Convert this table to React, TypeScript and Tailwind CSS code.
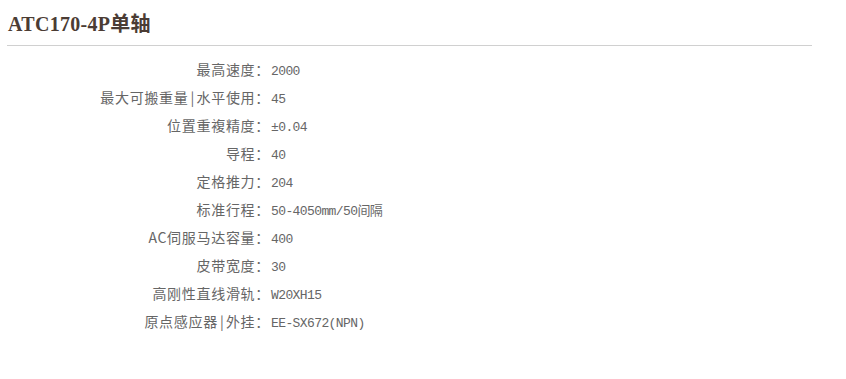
const specs = [
  { label: ["最高速度："], value: "2000" },
  { label: ["最大可搬重量", "水平使用："], value: "45" },
  { label: ["位置重複精度："], value: "±0.04" },
  { label: ["导程："], value: "40" },
  { label: ["定格推力："], value: "204" },
  { label: ["标准行程："], value: "50-4050mm/50间隔" },
  { label: ["AC伺服马达容量："], value: "400" },
  { label: ["皮带宽度："], value: "30" },
  { label: ["高刚性直线滑轨："], value: "W20XH15" },
  { label: ["原点感应器", "外挂："], value: "EE-SX672(NPN)" },
];

export default function App() {
  return (
    <div className="min-h-[379px] w-[846px] bg-white pl-[7px]">
      {/* Title */}
      <div className="w-[805px] border-b border-[#d0d0d0] pl-px pt-[11px] h-[46px]">
        <h1 className="text-[20px] font-bold leading-[26px] tracking-[0.3px] text-[#4b3c34] font-['Liberation_Serif','Noto_Sans_CJK_SC',serif]">
          ATC170-4P单轴
        </h1>
      </div>

      {/* Spec rows */}
      <div className="mt-[9px] flex flex-col text-[#666]">
        {specs.map((s) => (
          <div key={s.value} className="flex h-[28px] items-baseline leading-[28px]">
            <div className="w-[263px] shrink-0 text-right text-[14px] tracking-[0.7px] font-['Noto_Sans_CJK_SC',sans-serif]">
              {s.label[0]}
              {s.label[1] && (
                <>
                  <span className="inline-block w-[8px] text-center tracking-normal">|</span>
                  {s.label[1]}
                </>
              )}
            </div>
            <div className="pl-[1px] text-[13px] tracking-[-0.6px] font-['Liberation_Mono','Noto_Sans_CJK_SC',monospace]">
              {s.value}
            </div>
          </div>
        ))}
      </div>
    </div>
  );
}
